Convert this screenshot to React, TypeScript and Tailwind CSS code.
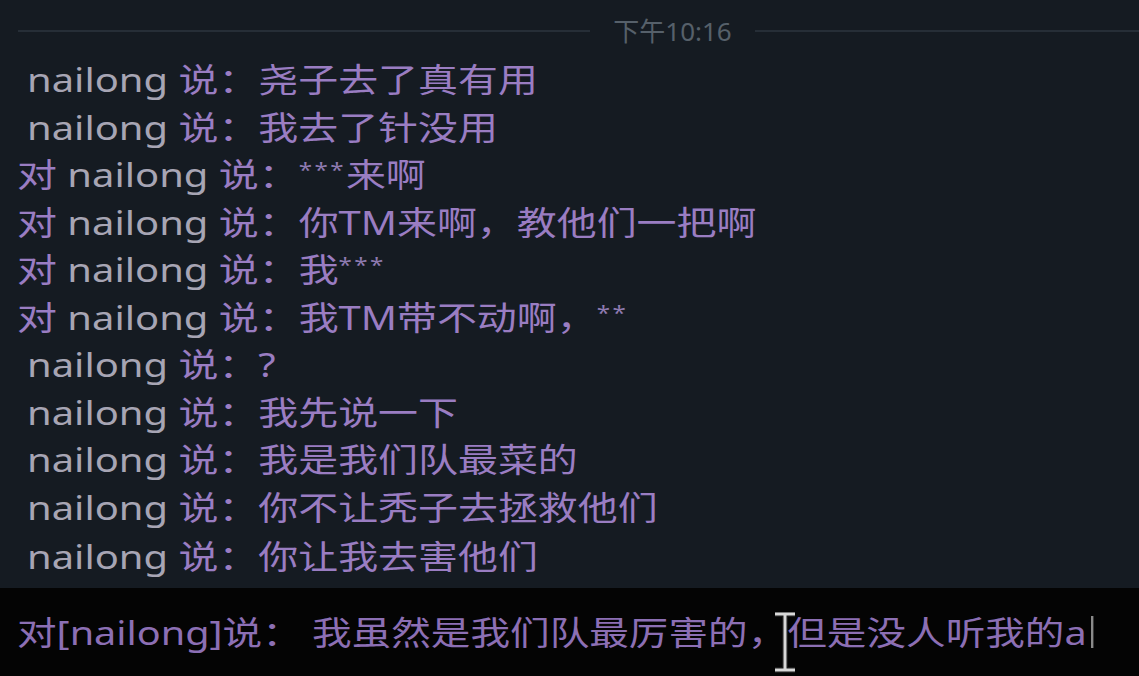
import React from 'react'

type Row = { to?: boolean; text: string }

const rows: Row[] = [
  { text: '尧子去了真有用' },
  { text: '我去了针没用' },
  { to: true, text: '***来啊' },
  { to: true, text: '你TM来啊，教他们一把啊' },
  { to: true, text: '我***' },
  { to: true, text: '我TM带不动啊，**' },
  { text: '?' },
  { text: '我先说一下' },
  { text: '我是我们队最菜的' },
  { text: '你不让秃子去拯救他们' },
  { text: '你让我去害他们' },
]

const font = { fontFamily: '"Noto Sans", "Noto Sans CJK SC", sans-serif' }

// asterisks in the log render small and raised
const Masked: React.FC<{ text: string }> = ({ text }) => (
  <>
    {text.split(/(\*+)/).map((part, i) =>
      part.startsWith('*') ? (
        <span key={i} className="text-[20px] align-[10px] tracking-[2px] text-[#8e7ab0]">{part}</span>
      ) : (
        <span key={i}>{part}</span>
      )
    )}
  </>
)

const ChatLine: React.FC<{ row: Row; last?: boolean }> = ({ row, last }) => (
  <div className={`h-[47.5px] flex items-center whitespace-pre ${last ? 'mt-[2px]' : ''} ${row.to ? 'pl-[17px]' : 'pl-[27px]'}`}>
    <span className="inline-block origin-left scale-x-[1.21] text-[33px] leading-none">
      {row.to && <span className="text-[#9a7dc2]">对 </span>}
      <span className="text-[#a7a5b4]">nailong </span>
      <span className="text-[#9a7dc2]">说：<Masked text={row.text} /></span>
    </span>
  </div>
)

export default function App() {
  return (
    <div className="w-[1139px] h-[676px] bg-[#151b22] flex flex-col overflow-hidden" style={font}>
      <div className="flex-1 flex flex-col">
        <div className="h-[56px] flex items-center pt-[6px] pl-[18px]">
          <div className="w-[572px] h-[2px] bg-[#262e37]" />
          <span className="w-[165px] text-center text-[26px] leading-none text-[#56606a]">下午10:16</span>
          <div className="flex-1 h-[2px] bg-[#262e37]" />
        </div>
        {rows.map((r, i) => (
          <ChatLine key={i} row={r} last={i === rows.length - 1} />
        ))}
      </div>
      <div className="h-[88px] bg-[#040404] relative flex items-center pl-[17px] whitespace-pre">
        <span className="inline-flex items-center origin-left scale-x-[1.2] text-[33px] leading-none text-[#8c6fb4]">
          对[nailong]说： 我虽然是我们队最厉害的，但是没人听我的a
          <span className="ml-[4px] w-[2px] h-[32px] bg-[#8a8a8a]" />
        </span>
        <svg className="absolute left-[772px] top-[24px]" width="26" height="62" viewBox="0 0 26 62">
          <path d="M3 2 H23 M13 2 V58 M3 58 H23" stroke="#1a1a1a" strokeWidth="6" fill="none" />
          <path d="M3 2 H23 M13 2 V58 M3 58 H23" stroke="#d8d8d8" strokeWidth="3" fill="none" />
        </svg>
      </div>
    </div>
  )
}
